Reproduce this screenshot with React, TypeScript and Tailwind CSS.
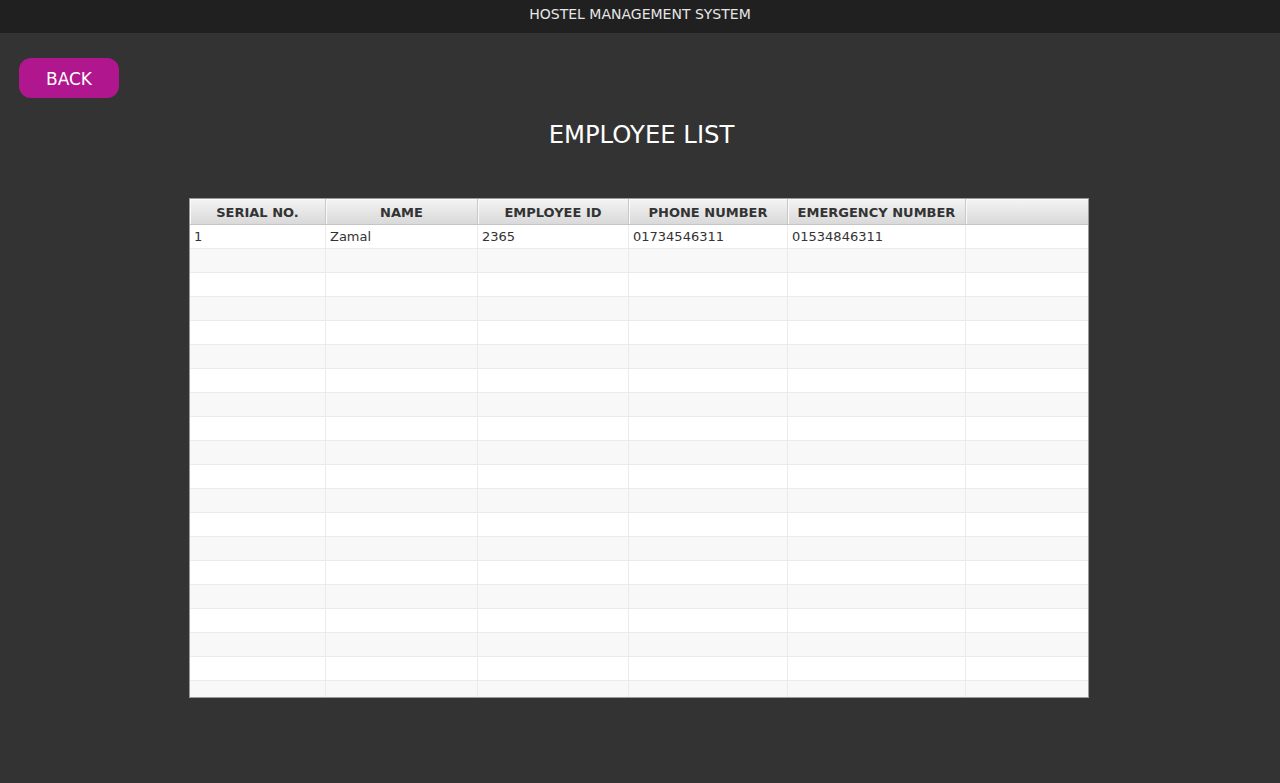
const columns = [
  { title: 'SERIAL NO.', width: 'w-[136px]' },
  { title: 'NAME', width: 'w-[152px]' },
  { title: 'EMPLOYEE ID', width: 'w-[151px]' },
  { title: 'PHONE NUMBER', width: 'w-[159px]' },
  { title: 'EMERGENCY NUMBER', width: 'w-[178px]' },
  { title: '', width: 'flex-1' },
]

const employees = [['1', 'Zamal', '2365', '01734546311', '01534846311', '']]

const App = () => {
  const rows = Array.from({ length: 20 }, (_, i) => employees[i] ?? ['', '', '', '', '', ''])

  return (
    <div className="w-[1280px] h-[783px] bg-[#333333] font-['DejaVu_Sans',sans-serif] overflow-hidden flex flex-col">
      {/* Title bar */}
      <div className="h-[33px] bg-[#202020] flex items-center justify-center text-[14px] text-[#e6e6e6] pb-[4px]">
        HOSTEL MANAGEMENT SYSTEM
      </div>

      <div className="flex flex-col px-[19px] pt-[25px]">
        <button className="w-[100px] h-[40px] rounded-[12px] bg-[#b0168e] text-white text-[17px] flex items-center justify-center pt-[4px]">
          BACK
        </button>

        <h1 className="text-center text-white text-[24.3px] mt-[21px] leading-[32px] pl-[3px]">EMPLOYEE LIST</h1>
      </div>

      {/* Table */}
      <div className="ml-[189px] mt-[47px] w-[900px] h-[500px] border border-[#9a9a9a] bg-white overflow-hidden flex flex-col">
        <div className="flex h-[26px] bg-gradient-to-b from-[#f4f4f4] to-[#d9d9d9] border-b border-[#c4c4c4]">
          {columns.map((col, i) => (
            <div
              key={i}
              className={`${col.width} shrink-0 border-r border-[#c8c8c8] last:border-r-0 shadow-[inset_1px_1px_0_#fafafa] flex items-center justify-center text-[13px] font-bold text-[#333333] pt-[2px]`}
            >
              {col.title}
            </div>
          ))}
        </div>
        <div className="flex-1 overflow-hidden">
          {rows.map((row, r) => (
            <div
              key={r}
              className={`flex h-[24px] border-b border-[#ebebeb] ${r % 2 === 1 ? 'bg-[#f8f8f8]' : 'bg-white'}`}
            >
              {row.map((cell, c) => (
                <div
                  key={c}
                  className={`${columns[c].width} shrink-0 border-r border-[#ebebeb] last:border-r-0 px-[4px] flex items-center text-[13px] text-[#333333]`}
                >
                  {cell}
                </div>
              ))}
            </div>
          ))}
        </div>
      </div>
    </div>
  )
}

export default App
